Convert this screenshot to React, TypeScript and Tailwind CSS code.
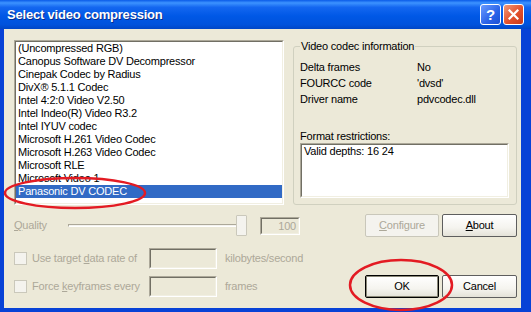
import React from "react";

const codecs = [
  "(Uncompressed RGB)",
  "Canopus Software DV Decompressor",
  "Cinepak Codec by Radius",
  "DivX® 5.1.1 Codec",
  "Intel 4:2:0 Video V2.50",
  "Intel Indeo(R) Video R3.2",
  "Intel IYUV codec",
  "Microsoft H.261 Video Codec",
  "Microsoft H.263 Video Codec",
  "Microsoft RLE",
  "Microsoft Video 1",
  "Panasonic DV CODEC",
];

// sunken 3d border used by list / edit boxes
function Sunken({ className, children }: { className: string; children?: React.ReactNode }) {
  return (
    <div
      className={
        "border border-t-[#ACA899] border-l-[#ACA899] border-b-white border-r-white " + className
      }
    >
      <div className="h-full w-full border border-t-[#716F64] border-l-[#716F64] border-b-[#F1EFE2] border-r-[#F1EFE2]">
        {children}
      </div>
    </div>
  );
}

function XpButton({
  children,
  className,
  disabled,
  isDefault,
}: {
  children: React.ReactNode;
  className: string;
  disabled?: boolean;
  isDefault?: boolean;
}) {
  return (
    <button
      className={
        "h-[23px] rounded-[2px] border flex items-center justify-center bg-[linear-gradient(to_bottom,#FFFFFF_0%,#F5F4EF_60%,#E4E2D8_100%)] " +
        (disabled
          ? "border-[#C9C7BA] text-[#ACA899] bg-none bg-[#F4F3EE] "
          : isDefault
          ? "border-black shadow-[inset_0_0_0_1px_#8A8878] "
          : "border-[#5E5E5E] ") +
        className
      }
    >
      {children}
    </button>
  );
}

function Checkbox() {
  return <div className="w-[13px] h-[13px] border border-[#CAC8BB] bg-[#F4F3EE] shrink-0" />;
}

export default function App() {
  return (
    <div className="relative w-[531px] h-[312px] flex flex-col bg-[#0842D6] font-['Liberation_Sans',Arial,sans-serif] text-[11px] tracking-[-0.2px] text-black overflow-hidden">
      {/* Title bar */}
      <div className="h-[29px] flex items-center pl-[7px] pr-[7px] bg-[linear-gradient(to_bottom,#0A5BE8_0%,#3D93FF_10%,#1467F0_25%,#0058E6_55%,#0052DC_85%,#0046C6_100%)]">
        <span className="flex-1 text-white font-bold text-[13px] tracking-[-0.2px] [text-shadow:1px_1px_0_#0A2E8C]">
          Select video compression
        </span>
        <div className="flex gap-[2px]">
          <div className="w-[21px] h-[21px] rounded-[3px] border border-white bg-[linear-gradient(135deg,#6A9BFF_0%,#2A63E8_60%,#1A4FD4_100%)] flex items-center justify-center text-white font-bold text-[15px] leading-none">
            ?
          </div>
          <div className="w-[21px] h-[21px] rounded-[3px] border border-white bg-[linear-gradient(135deg,#F09A7A_0%,#E2502C_55%,#C8391A_100%)] flex items-center justify-center">
            <svg width="11" height="11" viewBox="0 0 11 11">
              <path d="M1.5 1.5 L9.5 9.5 M9.5 1.5 L1.5 9.5" stroke="white" strokeWidth="2.2" strokeLinecap="square" />
            </svg>
          </div>
        </div>
      </div>

      {/* Body */}
      <div className="flex-1 ml-[4px] mr-[10px] mb-[4px] bg-[#ECE9D8] flex flex-col pl-[10px] pr-[4px] pt-[11px]">
        <div className="flex gap-[9px]">
          <Sunken className="w-[270px] h-[165px] bg-white">
            <div className="flex flex-col">
              {codecs.map((c, i) => (
                <div
                  key={c}
                  className={
                    "h-[13px] leading-[13px] pl-[2px] whitespace-nowrap " +
                    (i === codecs.length - 1 ? "bg-[#316AC5] text-white" : "")
                  }
                >
                  {c}
                </div>
              ))}
            </div>
          </Sunken>

          <div className="relative mt-[6px] w-[224px] h-[159px] border border-[#D0D0BF] rounded-[3px] pl-[6px] pt-[12px]">
            <span className="absolute -top-[7px] left-[6px] px-[1px] bg-[#ECE9D8] leading-[13px]">
              Video codec information
            </span>
            {[
              ["Delta frames", "No"],
              ["FOURCC code", "'dvsd'"],
              ["Driver name", "pdvcodec.dll"],
            ].map(([k, v]) => (
              <div key={k} className="flex h-[16px] leading-[16px]">
                <span className="w-[117px]">{k}</span>
                <span>{v}</span>
              </div>
            ))}
            <div className="mt-[23px] leading-[13px]">Format restrictions:</div>
            <Sunken className="w-[209px] h-[55px] bg-white">
              <div className="pl-[2px] leading-[13px]">Valid depths: 16 24</div>
            </Sunken>
          </div>
        </div>

        {/* Quality row */}
        <div className="mt-[9px] h-[23px] flex items-center">
          <span className="w-[54px] text-[#ACA899]">
            <span className="underline">Q</span>uality
          </span>
          <div className="relative w-[179px] h-[21px] flex items-center">
            <div className="w-full h-[3px] border border-t-[#ACA899] border-l-[#ACA899] border-b-white border-r-white bg-[#F4F3EE]" />
            <div className="absolute right-0 top-0 w-[11px] h-[21px] border border-[#CAC8BB] bg-[#F4F3EE] rounded-[1px]" />
          </div>
          <Sunken className="ml-[13px] w-[40px] h-[18px]">
            <div className="text-right pr-[2px] leading-[14px] text-[#ACA899]">100</div>
          </Sunken>
          <div className="flex-1" />
          <XpButton className="w-[74px]" disabled>
            <span>
              <span className="underline">C</span>onfigure
            </span>
          </XpButton>
          <XpButton className="ml-[3px] w-[75px]">
            <span>
              <span className="underline">A</span>bout
            </span>
          </XpButton>
        </div>

        {/* Data rate row */}
        <div className="mt-[11px] h-[21px] flex items-center text-[#ACA899]">
          <Checkbox />
          <span className="ml-[5px] w-[117px]">
            Use target <span className="underline">d</span>ata rate of
          </span>
          <Sunken className="w-[68px] h-[21px]" />
          <span className="ml-[8px]">kilobytes/second</span>
        </div>

        {/* Keyframes row */}
        <div className="mt-[6px] h-[23px] flex items-center">
          <Checkbox />
          <span className="ml-[5px] w-[117px] text-[#ACA899]">
            Force <span className="underline">k</span>eyframes every
          </span>
          <Sunken className="w-[68px] h-[21px]" />
          <span className="ml-[8px] text-[#ACA899]">frames</span>
          <div className="flex-1" />
          <XpButton className="w-[74px]" isDefault>
            OK
          </XpButton>
          <XpButton className="ml-[3px] w-[75px]">Cancel</XpButton>
        </div>
      </div>

      {/* red annotation rings */}
      <svg className="absolute inset-0 pointer-events-none" width="531" height="312">
        <ellipse cx="75" cy="193" rx="70" ry="15" fill="none" stroke="#E31B23" strokeWidth="2.5" />
        <ellipse cx="401" cy="285" rx="51" ry="25" fill="none" stroke="#E31B23" strokeWidth="2.5" />
      </svg>
    </div>
  );
}
